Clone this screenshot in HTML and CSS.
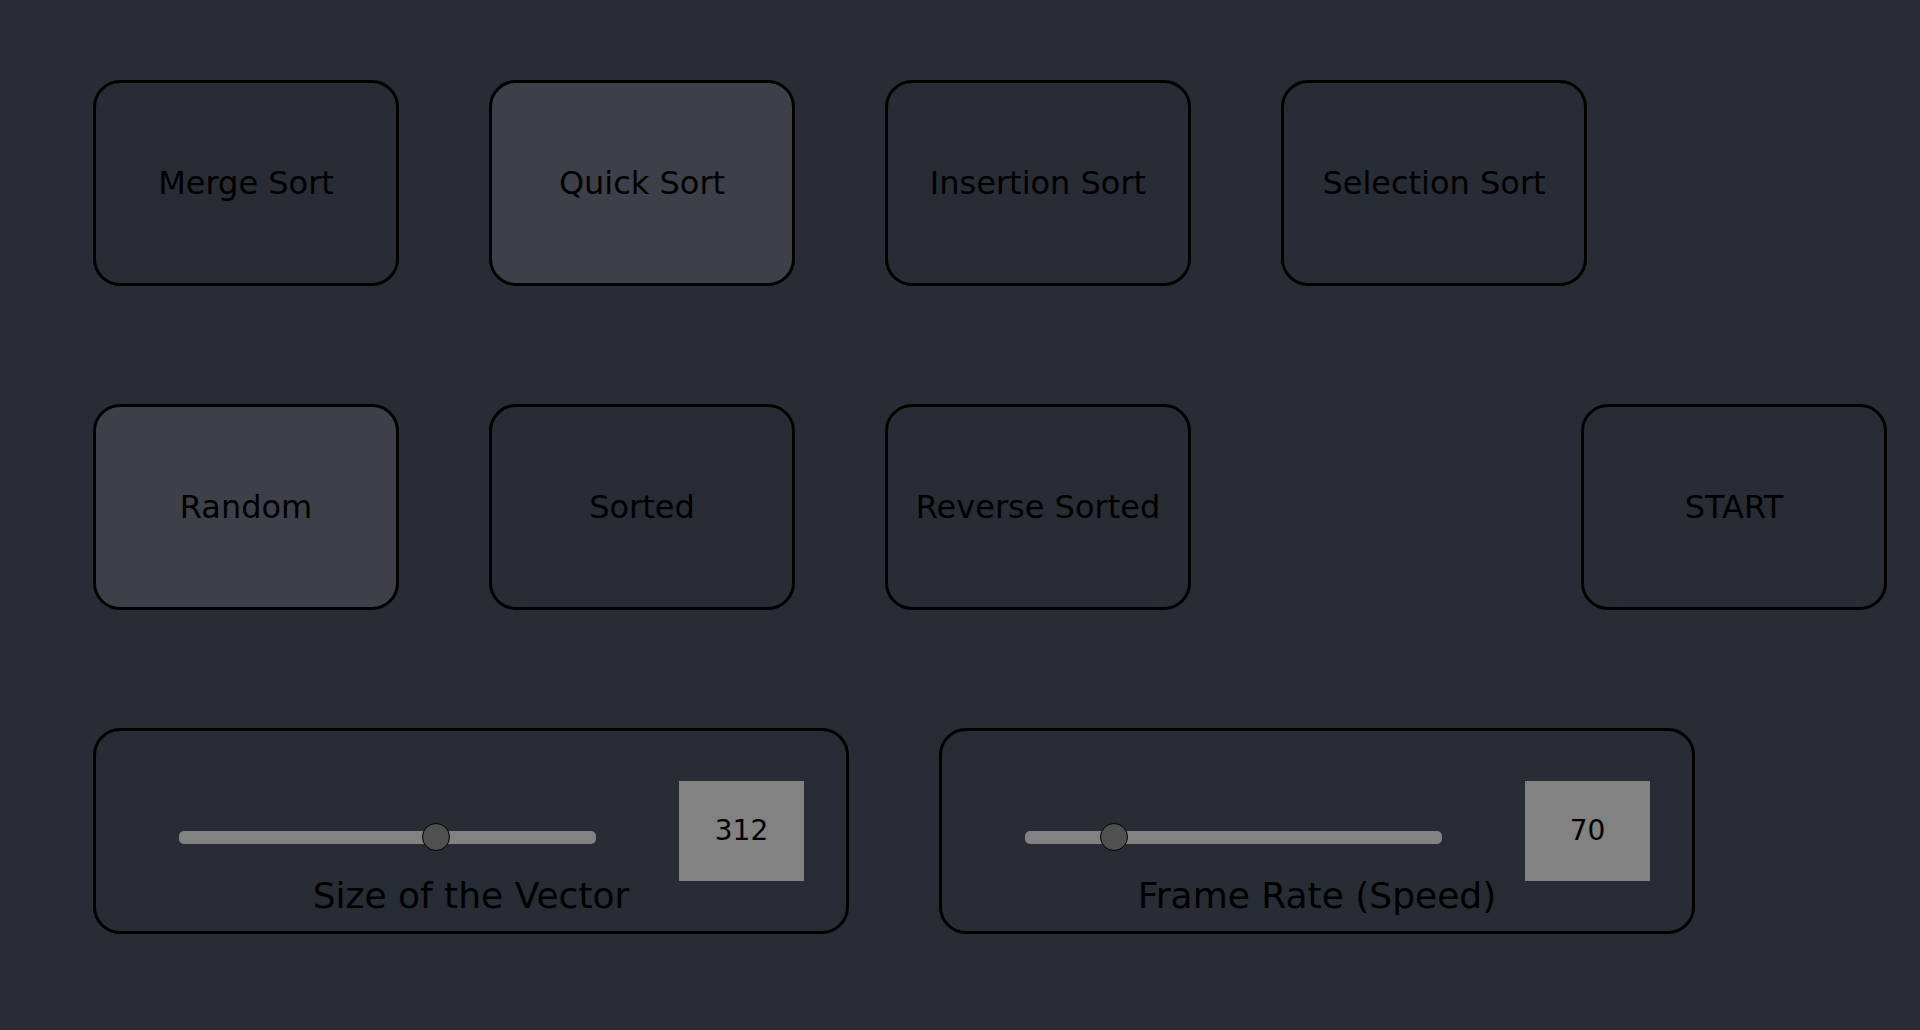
FILE: index.html
```html
<!DOCTYPE html>
<html lang="en">
<head>
  <meta charset="utf-8">
  <meta name="viewport" content="width=device-width, initial-scale=1">
  <title>Sorting Visualizer</title>
  <link rel="stylesheet" href="styles.css">
</head>
<body>
  <main class="menu">
    <div class="row" role="group" aria-label="Algorithm">
      <button class="option" type="button" aria-pressed="false">Merge Sort</button>
      <button class="option" type="button" aria-pressed="true">Quick Sort</button>
      <button class="option" type="button" aria-pressed="false">Insertion Sort</button>
      <button class="option" type="button" aria-pressed="false">Selection Sort</button>
    </div>

    <div class="row" role="group" aria-label="Initial order">
      <button class="option" type="button" aria-pressed="true">Random</button>
      <button class="option" type="button" aria-pressed="false">Sorted</button>
      <button class="option" type="button" aria-pressed="false">Reverse Sorted</button>
      <button class="option option-start" type="button">START</button>
    </div>

    <div class="row">
      <section class="panel">
        <div class="control">
          <input class="slider" id="size" type="range" min="0" max="500" value="312">
          <output class="value" for="size">312</output>
        </div>
        <label class="caption" for="size">Size of the Vector</label>
      </section>
      <section class="panel">
        <div class="control">
          <input class="slider" id="rate" type="range" min="0" max="363" value="70">
          <output class="value" for="rate">70</output>
        </div>
        <label class="caption" for="rate">Frame Rate (Speed)</label>
      </section>
    </div>
  </main>
</body>
</html>
```
FILE: styles.css
```css
* {
  box-sizing: border-box;
}

body {
  margin: 0;
  min-height: 100vh;
  background: #282c34;
  color: #000;
  font-family: "DejaVu Sans", sans-serif;
}

.menu {
  display: flex;
  flex-direction: column;
  gap: 118px;
  padding: 80px 33px 80px 93px;
}

.row {
  display: flex;
  gap: 90px;
}

.option,
.panel {
  min-height: 206px;
  border: 3px solid #000;
  border-radius: 27px;
  background: transparent;
}

.option {
  flex: 0 1 306px;
  padding: 0;
  color: inherit;
  font: inherit;
  font-size: 32px;
  cursor: pointer;
}

.option[aria-pressed="true"] {
  background: #3d4048;
}

.option-start {
  margin-left: auto;
}

.panel {
  flex: 0 1 756px;
  display: flex;
  flex-direction: column;
  padding: 50px 0 20px;
}

.control {
  display: flex;
  align-items: center;
  gap: 83px;
  padding: 0 42px 0 83px;
}

.slider {
  flex: 1 1 0;
  min-width: 0;
  height: 28px;
  margin: 12px 0 0;
  appearance: none;
  background: transparent;
  cursor: pointer;
}

.slider::-webkit-slider-runnable-track {
  height: 13px;
  border-radius: 5px;
  background: #828282;
}

.slider::-webkit-slider-thumb {
  appearance: none;
  width: 28px;
  height: 28px;
  margin-top: -8px;
  border: 1px solid #000;
  border-radius: 50%;
  background: #505050;
}

.value {
  flex: none;
  width: 125px;
  background: #828282;
  font-size: 28px;
  line-height: 100px;
  text-align: center;
}

.caption {
  align-self: center;
  font-size: 36px;
  line-height: 30px;
}

@media (max-width: 1500px) {
  .menu {
    gap: 60px;
    padding: 40px;
  }

  .row {
    flex-wrap: wrap;
    gap: 40px;
  }
}
```
